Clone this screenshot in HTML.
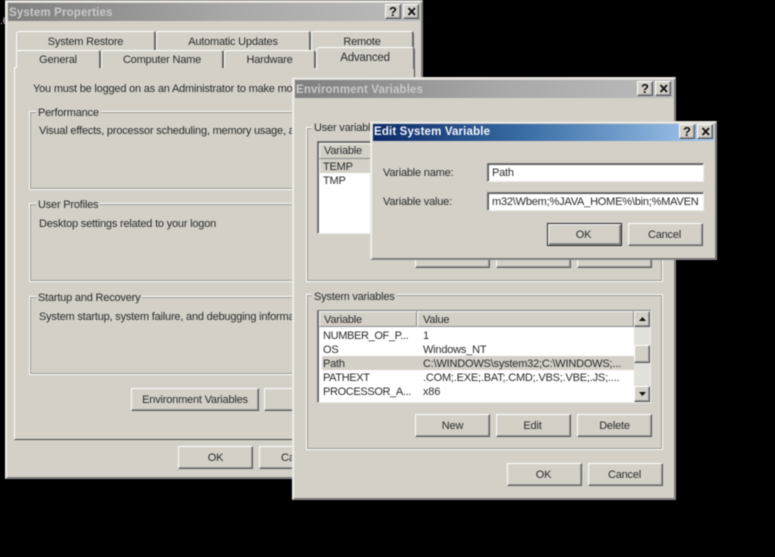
<!DOCTYPE html>
<html><head><meta charset="utf-8"><title>System Properties</title>
<style>
html,body{margin:0;padding:0;background:#000;}
#r{position:relative;width:775px;height:557px;overflow:hidden;background:#000;font:11px/14px "Liberation Sans",sans-serif;letter-spacing:-.2px;color:#2a2a2a;filter:blur(.4px);}
#r div,#r span{position:absolute;box-sizing:border-box;white-space:nowrap;}
.win{background:#d4d0c8;border:1px solid #888;border-top-color:#d8d5ce;border-left-color:#e8e6e0;box-shadow:inset 1px 1px 0 #f4f3ef,inset -1px -1px 0 #777,inset 2px 2px 0 #d4d0c8;}
.tb{height:18px;font:bold 11.5px/20px "Liberation Sans",sans-serif;padding-left:1px;letter-spacing:.15px;}
.in{background:linear-gradient(90deg,#7f7f7f,#a9a9a9 55%,#bbb);color:#c9c9c9;}
.ac{background:linear-gradient(90deg,#0d2a68,#3a6ea5 45%,#a6caf0);color:#f4f6fa;}
.b{background:#d4d0c8;border:1px solid;border-color:#fff #555 #555 #fff;box-shadow:inset -1px -1px 0 #999;text-align:center;padding-top:1px;}
#r .s{width:16px;height:15px;padding:0;letter-spacing:0;font:bold 13px/13px "Liberation Sans",sans-serif;color:#111;}
.s svg{position:absolute;left:3px;top:2px;}
.g{border:1px solid #fff;outline:1px solid #9a9892;outline-offset:-2px;}
.l{background:#d4d0c8;padding:0 2px;}
.t{line-height:14px;margin-top:1px;}
.tab{background:#d4d0c8;border:1px solid #fff;border-bottom:0;border-right:2px solid #666;border-radius:3px 3px 0 0;text-align:center;}
.lv{background:#fff;border:1px solid;border-color:#777 #eee #eee #777;box-shadow:inset 1px 1px 0 #666;overflow:hidden;}
.hd{background:#d4d0c8;border:1px solid;border-color:#fff #888 #888 #fff;}
.i{background:#fff;border:1px solid;border-color:#777 #eee #eee #777;box-shadow:inset 1px 1px 0 #555;padding-top:1px;}
.sc{background:repeating-conic-gradient(#d4d0c8 0 25%,#f2f1ee 0 50%) 0 0/2px 2px;}
.c{letter-spacing:-.35px;}
</style></head><body><div id="r">
<span style="left:0;top:15px;color:#ccc;font-size:10px">.6</span>

<!-- System Properties -->
<div class="win" style="left:5px;top:0;width:418px;height:479px"></div>
<div class="tb in" style="left:8px;top:3px;width:412px">System Properties</div>
<div class="b s" style="left:385px;top:4px">?</div>
<div class="b s" style="left:403px;top:4px"><svg width="10" height="9" viewBox="0 0 10 9"><path d="M1.5 1L8 8M8 1L1.5 8" stroke="#111" stroke-width="1.8"/></svg></div>

<div class="tab" style="left:16px;top:31px;width:140px;height:20px;line-height:20px">System Restore</div>
<div class="tab" style="left:156px;top:31px;width:155px;height:20px;line-height:20px">Automatic Updates</div>
<div class="tab" style="left:311px;top:31px;width:103px;height:20px;line-height:20px">Remote</div>
<div style="left:14px;top:67px;width:401px;height:373px;background:#d4d0c8;border:1px solid;border-color:#fff #444 #444 #fff"></div>
<div class="tab" style="left:16px;top:50px;width:85px;height:18px;line-height:18px">General</div>
<div class="tab" style="left:101px;top:50px;width:123px;height:18px;line-height:18px">Computer Name</div>
<div class="tab" style="left:224px;top:50px;width:92px;height:18px;line-height:18px">Hardware</div>
<div class="tab" style="left:316px;top:47px;width:99px;height:22px;line-height:21px;font-size:11.5px">Advanced</div>

<span class="t" style="left:33px;top:81px">You must be logged on as an Administrator to make most of these changes.</span>

<div class="g" style="left:29px;top:111px;width:300px;height:79px"></div>
<span class="t l" style="left:36px;top:105px">Performance</span>
<span class="t" style="left:39px;top:123px">Visual effects, processor scheduling, memory usage, and virtual memory</span>

<div class="g" style="left:29px;top:203px;width:300px;height:79px"></div>
<span class="t l" style="left:36px;top:197px">User Profiles</span>
<span class="t" style="left:39px;top:216px">Desktop settings related to your logon</span>

<div class="g" style="left:29px;top:296px;width:300px;height:79px"></div>
<span class="t l" style="left:36px;top:290px">Startup and Recovery</span>
<span class="t" style="left:39px;top:309px">System startup, system failure, and debugging information</span>

<div class="b" style="left:131px;top:388px;width:128px;height:23px;line-height:21px">Environment Variables</div>
<div class="b" style="left:264px;top:388px;width:60px;height:23px"></div>
<div class="b" style="left:178px;top:446px;width:75px;height:23px;line-height:21px">OK</div>
<div class="b" style="left:259px;top:446px;width:75px;height:23px;line-height:21px;text-align:left;padding-left:21px">Cancel</div>

<!-- Environment Variables -->
<div class="win" style="left:292px;top:77px;width:384px;height:423px"></div>
<div class="tb in" style="left:295px;top:80px;width:378px">Environment Variables</div>
<div class="b s" style="left:637px;top:81px">?</div>
<div class="b s" style="left:655px;top:81px"><svg width="10" height="9" viewBox="0 0 10 9"><path d="M1.5 1L8 8M8 1L1.5 8" stroke="#111" stroke-width="1.8"/></svg></div>

<div class="g" style="left:306px;top:127px;width:357px;height:155px"></div>
<span class="t l" style="left:312px;top:120px">User variables for Administrator</span>
<div class="lv" style="left:317px;top:141px;width:334px;height:93px"></div>
<div class="hd" style="left:319px;top:143px;width:100px;height:16px;line-height:15px;padding-left:4px;text-align:left">Variable</div>
<div style="left:320px;top:159px;width:100px;height:14px;background:#d4d0c8"></div>
<span class="t" style="left:323px;top:159px">TEMP</span>
<span class="t" style="left:323px;top:173px">TMP</span>
<div class="b" style="left:415px;top:246px;width:75px;height:22px"></div>
<div class="b" style="left:496px;top:246px;width:75px;height:22px"></div>
<div class="b" style="left:577px;top:246px;width:75px;height:22px"></div>

<div class="g" style="left:306px;top:294px;width:357px;height:156px"></div>
<span class="t l" style="left:312px;top:289px">System variables</span>
<div class="lv" style="left:317px;top:310px;width:334px;height:93px"></div>
<div class="hd" style="left:319px;top:311px;width:98px;height:16px;line-height:16px;padding-left:4px;text-align:left">Variable</div>
<div class="hd" style="left:417px;top:311px;width:217px;height:16px;line-height:16px;padding-left:5px;text-align:left">Value</div>
<div style="left:322px;top:356px;width:312px;height:14px;background:#d4d0c8"></div>
<span class="t c" style="left:323px;top:328px">NUMBER_OF_P...</span><span class="t" style="left:423px;top:328px">1</span>
<span class="t" style="left:323px;top:342px">OS</span><span class="t" style="left:423px;top:342px">Windows_NT</span>
<span class="t" style="left:323px;top:356px">Path</span><span class="t" style="left:423px;top:356px">C:\WINDOWS\system32;C:\WINDOWS;...</span>
<span class="t c" style="left:323px;top:370px">PATHEXT</span><span class="t" style="left:423px;top:370px">.COM;.EXE;.BAT;.CMD;.VBS;.VBE;.JS;....</span>
<span class="t c" style="left:323px;top:384px">PROCESSOR_A...</span><span class="t" style="left:423px;top:384px">x86</span>
<div class="sc" style="left:634px;top:311px;width:16px;height:90px"></div>
<div class="b" style="left:634px;top:311px;width:16px;height:16px"><svg style="position:absolute;left:3px;top:4px" width="9" height="6"><path d="M4.5 1L8 5H1z" fill="#111"/></svg></div>
<div class="b" style="left:634px;top:345px;width:16px;height:18px"></div>
<div class="b" style="left:634px;top:386px;width:16px;height:16px"><svg style="position:absolute;left:3px;top:4px" width="9" height="6"><path d="M1 1H8L4.5 5z" fill="#111"/></svg></div>
<div class="b" style="left:415px;top:414px;width:75px;height:23px;line-height:21px">New</div>
<div class="b" style="left:496px;top:414px;width:75px;height:23px;line-height:21px;padding-right:2px">Edit</div>
<div class="b" style="left:577px;top:414px;width:75px;height:23px;line-height:21px">Delete</div>
<div class="b" style="left:507px;top:463px;width:75px;height:23px;line-height:21px;padding-right:2px">OK</div>
<div class="b" style="left:588px;top:463px;width:75px;height:23px;line-height:21px;padding-right:2px">Cancel</div>

<!-- Edit System Variable -->
<div class="win" style="left:370px;top:121px;width:347px;height:139px"></div>
<div class="tb ac" style="left:373px;top:124px;width:341px;height:17px;line-height:17px">Edit System Variable</div>
<div class="b s" style="left:679px;top:124px">?</div>
<div class="b s" style="left:697px;top:124px"><svg width="10" height="9" viewBox="0 0 10 9"><path d="M1.5 1L8 8M8 1L1.5 8" stroke="#111" stroke-width="1.8"/></svg></div>
<span class="t" style="left:383px;top:165px">Variable name:</span>
<span class="t" style="left:383px;top:194px">Variable value:</span>
<div class="i" style="left:487px;top:163px;width:217px;height:19px;line-height:17px;padding-left:4px">Path</div>
<div class="i" style="left:487px;top:192px;width:217px;height:19px;line-height:17px;padding-left:4px;overflow:hidden">m32\Wbem;%JAVA_HOME%\bin;%MAVEN</div>
<div class="b" style="left:547px;top:223px;width:75px;height:23px;line-height:21px;padding-right:2px;outline:1px solid #222;outline-offset:-1px;box-shadow:inset 1px 1px 0 #fff,inset -2px -2px 0 #888">OK</div>
<div class="b" style="left:628px;top:223px;width:75px;height:23px;line-height:21px;padding-right:2px">Cancel</div>
</div></body></html>
